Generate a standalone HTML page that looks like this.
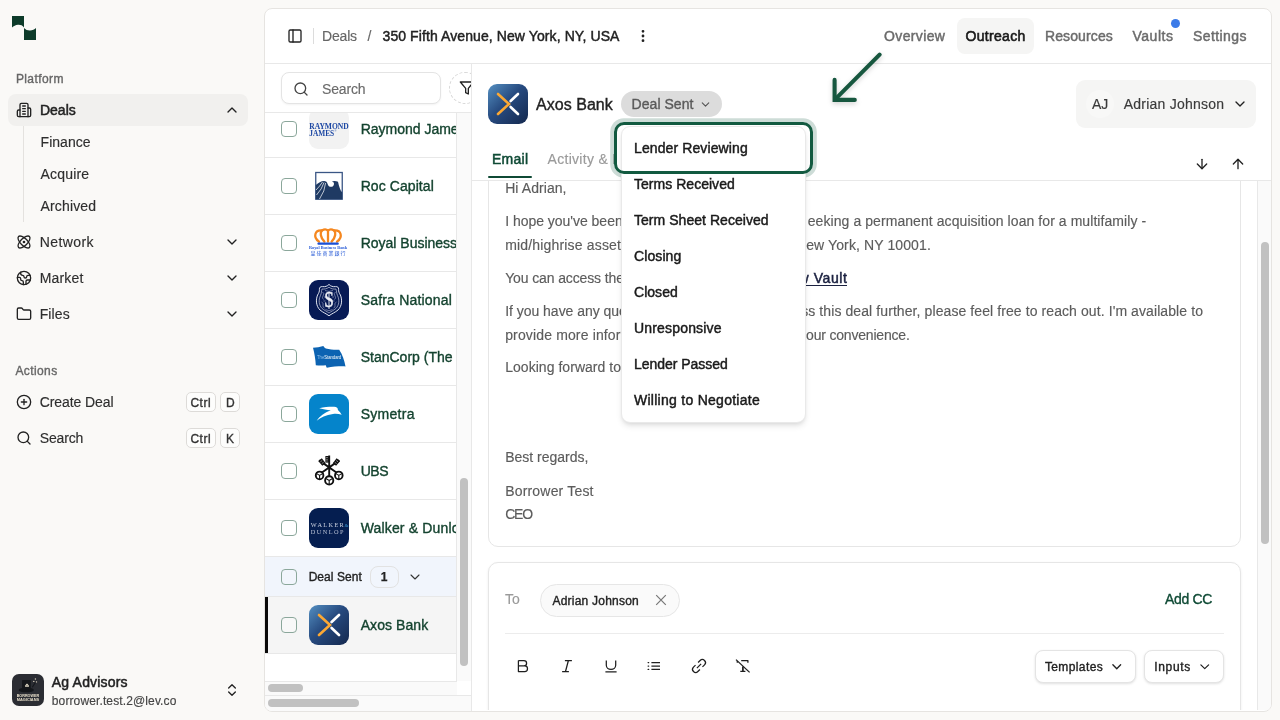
<!DOCTYPE html>
<html lang="en"><head><meta charset="utf-8"><title>Outreach - 350 Fifth Avenue</title>
<style>
*{box-sizing:border-box;margin:0;padding:0}
html,body{width:1280px;height:720px;overflow:hidden}
body{background:#faf9f7;font-family:"Liberation Sans",sans-serif;position:relative;color:#222}
#app{position:absolute;left:0;top:0;width:1280px;height:720px;will-change:transform}
.a,.t,.ic{position:absolute}
.t{white-space:pre;line-height:20px;display:block}
.ic{display:block;overflow:visible}
.cb{position:absolute;width:16px;height:16px;border:1px solid #8ba79b;border-radius:4px;background:#fff}
.kbd{position:absolute;height:20px;border:1px solid #dddbd8;border-radius:5px;background:#fdfdfc}
.row{position:absolute;left:0;width:192px;height:57px;border-bottom:1px solid #e8e8e8;background:#fff}
.logo{position:absolute;left:44px;width:40px;height:40px;border-radius:9px;overflow:hidden}
.btn{position:absolute;border:1px solid #e4e4e4;border-radius:8px;background:#fff;box-shadow:0 1px 3px rgba(0,0,0,.09),0 1px 2px rgba(0,0,0,.04)}
</style></head><body>
<div id="app">
<svg width="0" height="0" style="position:absolute"><defs><linearGradient id="axg" x1="0" y1="0" x2="1" y2="1"><stop offset="0" stop-color="#5590c2"/><stop offset=".45" stop-color="#274b80"/><stop offset="1" stop-color="#14284e"/></linearGradient></defs></svg>
<!-- sidebar -->
<svg class="ic" style="left:12px;top:16px" width="24" height="24" viewBox="0 0 24 24"><path fill="#0d3b2a" d="M0 0H12V11.4C10.5 9.2 8.2 8.6 6 8.8C3.6 9 1.6 10 0 11.6Z"/><path fill="#0d3b2a" d="M12 12C13.6 13.8 15.8 14.6 18 14.5C20.4 14.4 22.6 13.4 24 12V24H12Z"/></svg>
<div class="a" style="left:8px;top:94px;width:240px;height:32px;border-radius:8px;background:#f1f0ee"></div>
<div class="a" style="left:23px;top:126px;width:1px;height:96px;background:#e4e2df"></div>
<svg class="ic" style="left:16px;top:102px" width="16" height="16" viewBox="0 0 24 24" fill="none" stroke="#222" stroke-width="2" stroke-linecap="round" stroke-linejoin="round"><path d="M6 22V4a2 2 0 0 1 2-2h8a2 2 0 0 1 2 2v18Z"/><path d="M6 12H4a2 2 0 0 0-2 2v6a2 2 0 0 0 2 2h2"/><path d="M18 9h2a2 2 0 0 1 2 2v9a2 2 0 0 1-2 2h-2"/><path d="M10 6h4"/><path d="M10 10h4"/><path d="M10 14h4"/><path d="M10 18h4"/></svg>
<svg class="ic" style="left:224px;top:102px" width="16" height="16" viewBox="0 0 24 24" fill="none" stroke="#222" stroke-width="2" stroke-linecap="round" stroke-linejoin="round"><path d="m18 15-6-6-6 6"/></svg>
<svg class="ic" style="left:16px;top:234px" width="16" height="16" viewBox="0 0 24 24" fill="none" stroke="#222" stroke-width="2" stroke-linecap="round" stroke-linejoin="round"><circle cx="12" cy="12" r="1"/><path d="M20.2 20.2c2.04-2.03.02-7.36-4.5-11.9-4.54-4.52-9.87-6.54-11.9-4.5-2.04 2.03-.02 7.36 4.5 11.9 4.54 4.52 9.87 6.54 11.9 4.5Z"/><path d="M15.7 15.7c4.52-4.54 6.54-9.87 4.5-11.9-2.03-2.04-7.36-.02-11.9 4.5-4.52 4.54-6.54 9.87-4.5 11.9 2.03 2.04 7.36.02 11.9-4.5Z"/></svg>
<svg class="ic" style="left:224px;top:234px" width="16" height="16" viewBox="0 0 24 24" fill="none" stroke="#222" stroke-width="2" stroke-linecap="round" stroke-linejoin="round"><path d="m6 9 6 6 6-6"/></svg>
<svg class="ic" style="left:16px;top:270px" width="16" height="16" viewBox="0 0 24 24" fill="none" stroke="#222" stroke-width="2" stroke-linecap="round" stroke-linejoin="round"><path d="M21.54 15H17a2 2 0 0 0-2 2v4.54"/><path d="M7 3.34V5a3 3 0 0 0 3 3a2 2 0 0 1 2 2c0 1.1.9 2 2 2a2 2 0 0 0 2-2c0-1.1.9-2 2-2h3.17"/><path d="M11 21.95V18a2 2 0 0 0-2-2a2 2 0 0 1-2-2v-1a2 2 0 0 0-2-2H2.05"/><circle cx="12" cy="12" r="10"/></svg>
<svg class="ic" style="left:224px;top:270px" width="16" height="16" viewBox="0 0 24 24" fill="none" stroke="#222" stroke-width="2" stroke-linecap="round" stroke-linejoin="round"><path d="m6 9 6 6 6-6"/></svg>
<svg class="ic" style="left:16px;top:306px" width="16" height="16" viewBox="0 0 24 24" fill="none" stroke="#222" stroke-width="2" stroke-linecap="round" stroke-linejoin="round"><path d="M20 20a2 2 0 0 0 2-2V8a2 2 0 0 0-2-2h-7.9a2 2 0 0 1-1.69-.9L9.6 3.9A2 2 0 0 0 7.93 3H4a2 2 0 0 0-2 2v13a2 2 0 0 0 2 2Z"/></svg>
<svg class="ic" style="left:224px;top:306px" width="16" height="16" viewBox="0 0 24 24" fill="none" stroke="#222" stroke-width="2" stroke-linecap="round" stroke-linejoin="round"><path d="m6 9 6 6 6-6"/></svg>
<svg class="ic" style="left:16px;top:394px" width="16" height="16" viewBox="0 0 24 24" fill="none" stroke="#222" stroke-width="2" stroke-linecap="round" stroke-linejoin="round"><circle cx="12" cy="12" r="10"/><path d="M8 12h8"/><path d="M12 8v8"/></svg>
<svg class="ic" style="left:16px;top:430px" width="16" height="16" viewBox="0 0 24 24" fill="none" stroke="#222" stroke-width="2" stroke-linecap="round" stroke-linejoin="round"><circle cx="11" cy="11" r="8"/><path d="m21 21-4.3-4.3"/></svg>
<div class="kbd" style="left:186px;top:392px;width:30px"></div>
<div class="kbd" style="left:220px;top:392px;width:20px"></div>
<div class="kbd" style="left:186px;top:428px;width:30px"></div>
<div class="kbd" style="left:220px;top:428px;width:20px"></div>
<svg class="ic" style="left:12px;top:674px" width="32" height="32" viewBox="0 0 32 32"><rect width="32" height="32" rx="7" fill="#2b2d33"/><ellipse cx="14.3" cy="16" rx="7.6" ry="2.3" fill="#14161a"/><rect x="10" y="6" width="8.8" height="9.6" rx="0.6" fill="#15171b"/><path d="M13.3 11.2 L15 9.4 L16.7 11.2 V13 H13.3Z" fill="#e9e0cb"/><rect x="14.5" y="11.4" width="1" height="1.2" fill="#2b2d33"/><path d="M20.6 12.8 L23.2 8.8" stroke="#15171b" stroke-width="1.1" stroke-linecap="round"/><circle cx="23.4" cy="5" r="0.7" fill="#d9d0bb"/><circle cx="21.8" cy="7.4" r="0.7" fill="#d9d0bb"/><circle cx="24.5" cy="7.9" r="0.7" fill="#d9d0bb"/><text x="15.9" y="23.1" text-anchor="middle" font-family="Liberation Sans, sans-serif" font-weight="bold" font-size="3.3" fill="#e9e0cb" textLength="22.4" lengthAdjust="spacingAndGlyphs">BORROWER</text><text x="15.9" y="27.1" text-anchor="middle" font-family="Liberation Sans, sans-serif" font-weight="bold" font-size="3.9" fill="#e9e0cb" textLength="22.4" lengthAdjust="spacingAndGlyphs">MAGICIANS</text></svg>
<svg class="ic" style="left:224px;top:682px" width="16" height="16" viewBox="0 0 24 24" fill="none" stroke="#222" stroke-width="2" stroke-linecap="round" stroke-linejoin="round"><path d="m7 15 5 5 5-5"/><path d="m7 9 5-5 5 5"/></svg>
<span class="t" style="left:15.90px;top:69.00px;font-size:12px;color:#666;letter-spacing:0.402px;-webkit-text-stroke:0.36px #666;">Platform</span>
<span class="t" style="left:39.90px;top:100.00px;font-size:14px;color:#222;letter-spacing:0.021px;-webkit-text-stroke:0.5px #222;">Deals</span>
<span class="t" style="left:40.60px;top:132.00px;font-size:14px;color:#2e2e2e;letter-spacing:0.027px;-webkit-text-stroke:0.15px #2e2e2e;">Finance</span>
<span class="t" style="left:40.60px;top:164.00px;font-size:14px;color:#2e2e2e;letter-spacing:0.176px;-webkit-text-stroke:0.15px #2e2e2e;">Acquire</span>
<span class="t" style="left:40.60px;top:196.00px;font-size:14px;color:#2e2e2e;letter-spacing:0.129px;-webkit-text-stroke:0.15px #2e2e2e;">Archived</span>
<span class="t" style="left:39.70px;top:232.00px;font-size:14px;color:#2e2e2e;letter-spacing:0.406px;-webkit-text-stroke:0.15px #2e2e2e;">Network</span>
<span class="t" style="left:39.70px;top:268.00px;font-size:14px;color:#2e2e2e;letter-spacing:0.184px;-webkit-text-stroke:0.15px #2e2e2e;">Market</span>
<span class="t" style="left:39.70px;top:304.00px;font-size:14px;color:#2e2e2e;letter-spacing:0.127px;-webkit-text-stroke:0.15px #2e2e2e;">Files</span>
<span class="t" style="left:15.40px;top:361.00px;font-size:12px;color:#666;letter-spacing:0.406px;-webkit-text-stroke:0.36px #666;">Actions</span>
<span class="t" style="left:39.70px;top:392.00px;font-size:14px;color:#2e2e2e;letter-spacing:-0.073px;-webkit-text-stroke:0.15px #2e2e2e;">Create Deal</span>
<span class="t" style="left:39.70px;top:428.00px;font-size:14px;color:#2e2e2e;letter-spacing:-0.127px;-webkit-text-stroke:0.15px #2e2e2e;">Search</span>
<span class="t" style="left:190.40px;top:393.00px;font-size:12px;color:#333;letter-spacing:0.557px;-webkit-text-stroke:0.36px #333;">Ctrl</span>
<span class="t" style="left:226.10px;top:393.00px;font-size:12px;color:#333;letter-spacing:-0.472px;-webkit-text-stroke:0.36px #333;">D</span>
<span class="t" style="left:190.40px;top:429.00px;font-size:12px;color:#333;letter-spacing:0.557px;-webkit-text-stroke:0.36px #333;">Ctrl</span>
<span class="t" style="left:226.10px;top:429.00px;font-size:12px;color:#333;letter-spacing:0.184px;-webkit-text-stroke:0.36px #333;">K</span>
<span class="t" style="left:51.80px;top:672.00px;font-size:14px;color:#222;letter-spacing:0.188px;-webkit-text-stroke:0.5px #222;">Ag Advisors</span>
<span class="t" style="left:51.80px;top:691.00px;font-size:12px;color:#444;letter-spacing:0.122px;-webkit-text-stroke:0.15px #444;">borrower.test.2@lev.co</span>
<!-- main panel -->
<div class="a" style="left:264px;top:8px;width:1008px;height:704px;border:1px solid #e6e4e1;border-radius:8px;background:#fff;overflow:hidden"></div>
<div class="a" style="left:0;top:0;width:1280px;height:720px;clip-path:inset(9px 9px 9px 265px round 7px)">
<svg class="ic" style="left:287px;top:28px" width="16" height="16" viewBox="0 0 24 24" fill="none" stroke="#222" stroke-width="2" stroke-linecap="round" stroke-linejoin="round"><rect width="18" height="18" x="3" y="3" rx="2"/><path d="M9 3v18"/></svg>
<div class="a" style="left:313px;top:28px;width:1px;height:16px;background:#dcdcdc"></div>
<svg class="ic" style="left:635.3px;top:28px" width="16" height="16" viewBox="0 0 24 24" fill="none" stroke="#222" stroke-width="2.2" stroke-linecap="round" stroke-linejoin="round"><circle cx="12" cy="12" r="1"/><circle cx="12" cy="5" r="1"/><circle cx="12" cy="19" r="1"/></svg>
<div class="a" style="left:957px;top:18px;width:76.5px;height:35.5px;border-radius:8px;background:#f5f5f4"></div>
<div class="a" style="left:1170.8px;top:19px;width:9px;height:9px;border-radius:50%;background:#3b7be8"></div>
<div class="a" style="left:265px;top:63px;width:1006px;height:1px;background:#e8e8e8"></div>
<div class="a" style="left:281px;top:72px;width:160px;height:32px;border:1px solid #e4e4e4;border-radius:8px;background:#fff;box-shadow:0 1px 2px rgba(0,0,0,.05)"></div>
<svg class="ic" style="left:292.5px;top:80.5px" width="16" height="16" viewBox="0 0 24 24" fill="none" stroke="#444" stroke-width="2" stroke-linecap="round" stroke-linejoin="round"><circle cx="11" cy="11" r="8"/><path d="m21 21-4.3-4.3"/></svg>
<div class="a" style="left:449px;top:72px;width:22px;height:32px;overflow:hidden"><div class="a" style="left:0;top:0;width:32px;height:32px;border:1px dashed #d8d8d8;border-radius:50%"></div><svg class="ic" style="left:10.3px;top:8.3px" width="16" height="16" viewBox="0 0 24 24" fill="none" stroke="#222" stroke-width="2" stroke-linecap="round" stroke-linejoin="round"><polygon points="22 3 2 3 10 12.46 10 19 14 21 14 12.46 22 3"/></svg></div>
<div class="a" style="left:265px;top:112px;width:206px;height:1px;background:#e8e8e8"></div>
<div class="a" style="left:265px;top:113px;width:191.5px;height:567.5px;overflow:hidden;background:#fff">
<div class="row" style="top:-12.25px"></div>
<div class="cb" style="left:16px;top:8.25px"></div>
<div class="logo" style="top:-3.75px"><svg width="40" height="40" viewBox="0 0 40 40" style="display:block"><rect width="40" height="40" fill="#f2f2f2"/><text x="0.2" y="19.9" font-family="Liberation Serif, serif" font-weight="bold" font-size="8.6" fill="#1c47a3" textLength="39.6" lengthAdjust="spacingAndGlyphs">RAYMOND</text><text x="0.2" y="26.7" font-family="Liberation Serif, serif" font-weight="bold" font-size="8.2" fill="#1c47a3" textLength="25" lengthAdjust="spacingAndGlyphs">JAMES</text><text x="25.4" y="22.6" font-family="Liberation Sans, sans-serif" font-size="2.6" fill="#1c47a3">®</text></svg></div>
<div class="row" style="top:44.75px"></div>
<div class="cb" style="left:16px;top:65.25px"></div>
<div class="logo" style="top:53.25px"><svg width="40" height="40" viewBox="0 0 40 40" style="display:block"><rect width="40" height="40" fill="#fff"/><rect x="6.75" y="6.5" width="26.5" height="26.7" fill="#fff" stroke="#3a5685" stroke-width="1.3"/><path fill="#1f3a63" d="M6.8 19 C9.5 16.8 12 15 15 15 C17 15 18.2 16 18.6 18 C19.6 21.8 24.6 21.8 25 18 C25.2 16.6 24 15.6 22.7 15.6 C24 14.6 27 14.7 29 15.7 C30 20 31 24 33.2 26.5 V33.2 H6.8 Z"/><path d="M7 24 Q11 20 13.5 16 M7.5 29 Q13 23 15 16.5 M10.5 33 Q16 25 16.6 17" stroke="#fff" stroke-width=".7" fill="none"/></svg></div>
<div class="row" style="top:101.75px"></div>
<div class="cb" style="left:16px;top:122.25px"></div>
<div class="logo" style="top:110.25px"><svg width="40" height="40" viewBox="0 0 40 40" style="display:block"><rect width="40" height="40" fill="#fff"/><g fill="none" stroke="#f5871f" stroke-width="2.3" stroke-linecap="round"><path d="M10 18.6 C3.5 14 6 6.6 13 7.4 C15 6.2 17.5 6.2 19 7.6 C20.5 6.2 23 6.2 25 7.4 C32 6.6 34.5 14 28 18.6"/><path d="M15.4 18.6 C11 14 11 9.4 13 7.4 M19 7.6 V18.6 M22.6 18.6 C27 14 27 9.4 25 7.4"/></g><rect x="8.4" y="19.6" width="21.4" height="2.1" rx="1" fill="#1a50d8"/><text x="19" y="26.4" text-anchor="middle" font-family="Liberation Serif, serif" font-weight="bold" font-size="3.6" fill="#2458d6" textLength="38" lengthAdjust="spacingAndGlyphs">Royal Business Bank</text><text x="19" y="32.3" text-anchor="middle" font-family="Noto Sans CJK TC, Noto Sans CJK SC, sans-serif" font-size="5" fill="#2458d6" textLength="35" lengthAdjust="spacing">皇佳商業銀行</text></svg></div>
<div class="row" style="top:158.75px"></div>
<div class="cb" style="left:16px;top:179.25px"></div>
<div class="logo" style="top:167.25px"><svg width="40" height="40" viewBox="0 0 40 40" style="display:block"><rect width="40" height="40" fill="#071a55"/><g fill="none" stroke="#dfe3ee" stroke-linejoin="round"><path stroke-width="1" d="M20 4.400 C18.500 6.200 16 7 13.500 6.600 C11.500 6.400 10.200 7.400 10.400 9.400 C10.600 11.500 9.800 13 8.600 15 C6.600 20 7 26 11 30 C14 32.500 17.500 33.800 20 35.800 C22.500 33.800 26 32.500 29 30 C33 26 33.400 20 31.400 15 C30.200 13 29.400 11.500 29.600 9.400 C29.800 7.400 28.500 6.400 26.500 6.600 C24 7 21.500 6.200 20 4.400Z"/><path stroke-width=".6" d="M20 7.200 C18 8.800 15.500 9.300 13 9 C12.400 11 12.600 13.200 11.400 15.600 C9.400 20 9.800 25 13 28.400 C15.500 30.500 18 31.500 20 33 C22 31.500 24.500 30.500 27 28.400 C30.200 25 30.600 20 28.600 15.600 C27.400 13.200 27.600 11 27 9 C24.500 9.300 22 8.800 20 7.200Z"/><path stroke-width=".55" stroke="#b9c1d9" d="M13.500 12 q2.500 1.500 0.500 4 q-1.500 2 0.500 3.500 M26.500 12 q-2.500 1.500 -0.500 4 q1.500 2 -0.500 3.500 M12.500 22 q2.500 1 1.500 3.500 q-0.500 2 1.500 2.500 M27.500 22 q-2.500 1 -1.500 3.500 q0.500 2 -1.500 2.500 M16.500 29.500 q3.500 2.500 7 0 M16 10.500 q4 1.800 8 0 M15 17 h2 M23 17 h2 M14.500 21 h2 M23.500 21 h2"/></g><g transform="translate(20 27) scale(.72 1)"><text x="0" y="0" text-anchor="middle" font-family="Liberation Serif, serif" font-size="24" fill="#eef0f6" stroke="#eef0f6" stroke-width=".5">S</text></g><path d="M20 12 V29" stroke="#eef0f6" stroke-width=".9"/></svg></div>
<div class="row" style="top:215.75px"></div>
<div class="cb" style="left:16px;top:236.25px"></div>
<div class="logo" style="top:224.25px"><svg width="40" height="40" viewBox="0 0 40 40" style="display:block"><rect width="40" height="40" fill="#fff"/><path fill="#0c63b2" d="M4 10.800 C7.500 10.600 11 10 14.300 9 C15 10 15.800 10.900 16.800 11.500 C21 12.600 26 12.900 30.200 12.700 C33.500 17.500 35.400 23.500 36.500 29.400 C30 29.200 24 29.700 17.800 30.800 C17.300 30 17 29.100 16.800 28.200 C13.500 28.500 10 28.500 6.800 28.200 C6.500 22.300 5.500 16.500 4 10.800Z"/><text x="8" y="21.800" font-family="Liberation Sans, sans-serif" font-size="4.6" fill="#fff" textLength="24.200" lengthAdjust="spacingAndGlyphs"><tspan fill="#8fc0ea">The</tspan>Standard</text></svg></div>
<div class="row" style="top:272.75px"></div>
<div class="cb" style="left:16px;top:293.25px"></div>
<div class="logo" style="top:281.25px"><svg width="40" height="40" viewBox="0 0 40 40" style="display:block"><rect width="40" height="40" fill="#0584cb"/><path fill="#fff" d="M10.200 14.200 C16 13.200 22 12.600 26.800 13 C28.200 13.300 29 14.600 28.900 16.100 C30.500 17.500 31.800 19 32.700 20.700 C30 19.800 27 19.600 24 19.900 C17 20.800 11.500 23.500 7.700 26.700 C10.500 22.500 15.500 18.500 21.800 16.500 C18 15.800 14 15 10.200 14.200Z"/></svg></div>
<div class="row" style="top:329.75px"></div>
<div class="cb" style="left:16px;top:350.25px"></div>
<div class="logo" style="top:338.25px"><svg width="40" height="40" viewBox="0 0 40 40" style="display:block"><rect width="40" height="40" fill="#fff"/><g stroke="#111" fill="none" stroke-linecap="butt"><path stroke-width="1.900" d="M20.200 4.500 V25 M12.600 21.800 L30.200 9.400 M27.800 21.800 L10.200 9.400"/><circle cx="10.600" cy="24.400" r="3.800" stroke-width="1.900"/><circle cx="29.800" cy="24.400" r="3.800" stroke-width="1.900"/><circle cx="20.200" cy="29.400" r="4.100" stroke-width="1.900"/><path stroke-width="1.100" d="M10.600 24.400 l0 3.500 M10.600 24.400 l-3 -1.800 M10.600 24.400 l3 -1.800 M29.800 24.400 l0 3.500 M29.800 24.400 l-3 -1.800 M29.800 24.400 l3 -1.800 M20.200 29.400 l0 3.800 M20.200 29.400 l-3.300 -1.900 M20.200 29.400 l3.300 -1.900"/></g><g fill="#111"><rect x="16.400" y="5" width="3.500" height="6.600"/><path d="M9.200 10 l3.600 -2.700 l3.900 5 l-3.400 2.500Z M31.200 10 l-3.600 -2.700 l-3.900 5 l3.400 2.500Z"/></g><g stroke="#fff" stroke-width=".5"><path d="M17.200 6.500 h1.600 M17.200 8.300 h1.600 M17.200 10 h1.600 M11.400 10.800 l1.800 -1.300 M12.800 12.600 l1.800 -1.300 M29 10.800 l-1.800 -1.300 M27.600 12.600 l-1.800 -1.300"/></g></svg></div>
<div class="row" style="top:386.75px"></div>
<div class="cb" style="left:16px;top:407.25px"></div>
<div class="logo" style="top:395.25px"><svg width="40" height="40" viewBox="0 0 40 40" style="display:block"><rect width="40" height="40" fill="#051e50"/><text x="1.800" y="18.700" font-family="Liberation Serif, serif" font-size="6.300" fill="#cfd5e3" textLength="33" lengthAdjust="spacing">WALKER</text><text x="35.600" y="18.700" font-family="Liberation Serif, serif" font-size="5" fill="#3a9bd9">&amp;</text><text x="1.800" y="25.800" font-family="Liberation Serif, serif" font-size="6.300" fill="#b9c1d4" textLength="32.600" lengthAdjust="spacing">DUNLOP</text></svg></div>
<div class="a" style="left:0;top:443.5px;width:192px;height:40px;background:#f1f5fc;border-bottom:1px solid #e8e8e8"></div>
<div class="cb" style="left:16px;top:455.5px;background:transparent"></div>
<div class="a" style="left:105.19999999999999px;top:452.5px;width:28.5px;height:22px;border:1px solid #e2e2e2;border-radius:8px"></div>
<svg class="ic" style="left:141.8px;top:455.8px" width="16" height="16" viewBox="0 0 24 24" fill="none" stroke="#333" stroke-width="1.6" stroke-linecap="round" stroke-linejoin="round"><path d="m6 9 6 6 6-6"/></svg>
<div class="a" style="left:0;top:483.5px;width:192px;height:57px;background:#f5f5f5;border-bottom:1px solid #e8e8e8"></div>
<div class="a" style="left:0;top:483.5px;width:3px;height:56.5px;background:#0a0a0a"></div>
<div class="cb" style="left:16px;top:504px;background:#f8f8f8"></div>
<div class="logo" style="top:492px"><svg width="40" height="40" viewBox="0 0 40 40" style="display:block"><rect width="40" height="40" fill="url(#axg)"/><path d="M10 10 L21 20 L10 30" fill="none" stroke="#fba834" stroke-width="2.600" stroke-linecap="round" stroke-linejoin="miter"/><path d="M30 10 L22.600 17 M22.600 23 L30 30" fill="none" stroke="#fff" stroke-width="2.600" stroke-linecap="round"/></svg></div>
<span class="t" style="left:95.65px;top:6.00px;font-size:14px;color:#14432f;letter-spacing:-0.007px;-webkit-text-stroke:0.36px #14432f;">Raymond James</span>
<span class="t" style="left:95.65px;top:63.00px;font-size:14px;color:#14432f;letter-spacing:0.075px;-webkit-text-stroke:0.36px #14432f;">Roc Capital</span>
<span class="t" style="left:95.65px;top:120.00px;font-size:14px;color:#14432f;letter-spacing:-0.004px;-webkit-text-stroke:0.36px #14432f;">Royal Business Bank</span>
<span class="t" style="left:95.65px;top:177.00px;font-size:14px;color:#14432f;letter-spacing:0.195px;-webkit-text-stroke:0.36px #14432f;">Safra National Bank</span>
<span class="t" style="left:95.65px;top:234.00px;font-size:14px;color:#14432f;letter-spacing:0.009px;-webkit-text-stroke:0.36px #14432f;">StanCorp (The Standard)</span>
<span class="t" style="left:95.65px;top:291.00px;font-size:14px;color:#14432f;letter-spacing:0.296px;-webkit-text-stroke:0.36px #14432f;">Symetra</span>
<span class="t" style="left:95.65px;top:348.00px;font-size:14px;color:#14432f;letter-spacing:-0.449px;-webkit-text-stroke:0.36px #14432f;">UBS</span>
<span class="t" style="left:95.65px;top:405.00px;font-size:14px;color:#14432f;letter-spacing:0.161px;-webkit-text-stroke:0.36px #14432f;">Walker &amp; Dunlop</span>
<span class="t" style="left:43.65px;top:454.00px;font-size:12px;color:#222;letter-spacing:0.055px;-webkit-text-stroke:0.36px #222;">Deal Sent</span>
<span class="t" style="left:115.70px;top:454.00px;font-size:12px;color:#222;letter-spacing:0.513px;-webkit-text-stroke:0.25px #222;font-weight:bold;">1</span>
<span class="t" style="left:95.65px;top:502.00px;font-size:14px;color:#14432f;letter-spacing:0.085px;-webkit-text-stroke:0.36px #14432f;">Axos Bank</span>
</div>
<div class="a" style="left:456px;top:113px;width:15px;height:567.5px;background:#fafafa;border-left:1px solid #e8e8e8"></div>
<div class="a" style="left:460.25px;top:477.5px;width:7.5px;height:188px;border-radius:4px;background:#c1c1c1"></div>
<div class="a" style="left:265px;top:680.5px;width:191.5px;height:15px;background:#fafafa;border-top:1px solid #e8e8e8"></div><div class="a" style="left:265px;top:694.5px;width:206px;height:1px;background:#e8e8e8"></div>
<div class="a" style="left:268.25px;top:684.25px;width:34.75px;height:7.5px;border-radius:4px;background:#c1c1c1"></div>
<div class="a" style="left:265px;top:695.5px;width:206px;height:16px;background:#fafafa"></div>
<div class="a" style="left:268.25px;top:699.25px;width:90.75px;height:7.5px;border-radius:4px;background:#c1c1c1"></div>
<div class="a" style="left:471px;top:64px;width:1px;height:647px;background:#e8e8e8"></div>
<div class="a" style="left:488px;top:84px;width:40px;height:40px;border-radius:9px;overflow:hidden"><svg width="40" height="40" viewBox="0 0 40 40" style="display:block"><rect width="40" height="40" fill="url(#axg)"/><path d="M10 10 L21 20 L10 30" fill="none" stroke="#fba834" stroke-width="2.600" stroke-linecap="round" stroke-linejoin="miter"/><path d="M30 10 L22.600 17 M22.600 23 L30 30" fill="none" stroke="#fff" stroke-width="2.600" stroke-linecap="round"/></svg></div>
<div class="a" style="left:621px;top:91px;width:101px;height:26px;border-radius:13px;background:#dcdcdc"></div>
<svg class="ic" style="left:698.5px;top:98px" width="13" height="13" viewBox="0 0 24 24" fill="none" stroke="#555" stroke-width="2" stroke-linecap="round" stroke-linejoin="round"><path d="m6 9 6 6 6-6"/></svg>
<div class="a" style="left:1076px;top:80px;width:180px;height:48px;border-radius:9px;background:#f5f5f4"></div>
<div class="a" style="left:1086px;top:90px;width:28px;height:28px;border-radius:50%;background:#f8f8f7"></div>
<svg class="ic" style="left:1232px;top:96px" width="16" height="16" viewBox="0 0 24 24" fill="none" stroke="#222" stroke-width="2" stroke-linecap="round" stroke-linejoin="round"><path d="m6 9 6 6 6-6"/></svg>
<div class="a" style="left:472px;top:180px;width:799px;height:1px;background:#e8e8e8"></div>
<div class="a" style="left:488px;top:176px;width:43.5px;height:2px;background:#0f4a35;border-radius:1px"></div>
<svg class="ic" style="left:1193.8px;top:156px" width="16" height="16" viewBox="0 0 24 24" fill="none" stroke="#222" stroke-width="2" stroke-linecap="round" stroke-linejoin="round"><path d="M12 5v14"/><path d="m19 12-7 7-7-7"/></svg>
<svg class="ic" style="left:1229.8px;top:156px" width="16" height="16" viewBox="0 0 24 24" fill="none" stroke="#222" stroke-width="2" stroke-linecap="round" stroke-linejoin="round"><path d="m5 12 7-7 7 7"/><path d="M12 19V5"/></svg>
<div class="a" style="left:472px;top:181px;width:786px;height:529px;overflow:hidden;background:#fff">
<div class="a" style="left:16px;top:-20px;width:753px;height:385.5px;border:1px solid #e6e6e6;border-radius:10px;background:#fff"></div>
<span class="t" style="left:33.20px;top:-3.00px;font-size:14px;color:#5c5c5c;letter-spacing:0.070px;-webkit-text-stroke:0.15px #5c5c5c;">Hi Adrian,</span>
<span class="t" style="left:33.20px;top:30.00px;font-size:14px;color:#5c5c5c;letter-spacing:-0.023px;-webkit-text-stroke:0.15px #5c5c5c;max-width:292.2px;overflow:hidden;">I hope you've been well. We are currently s</span>
<span class="t" style="left:335.78px;top:30.00px;font-size:14px;color:#5c5c5c;letter-spacing:0.069px;-webkit-text-stroke:0.15px #5c5c5c;">ee</span>
<span class="t" style="left:351.50px;top:30.00px;font-size:14px;color:#5c5c5c;letter-spacing:0.069px;-webkit-text-stroke:0.15px #5c5c5c;">king a permanent acquisition loan for a multifamily -</span>
<span class="t" style="left:33.20px;top:54.00px;font-size:14px;color:#5c5c5c;letter-spacing:0.171px;-webkit-text-stroke:0.15px #5c5c5c;max-width:292.2px;overflow:hidden;">mid/highrise asset located at 350 Fifth Avenue, </span>
<span class="t" style="left:323.96px;top:54.00px;font-size:14px;color:#5c5c5c;letter-spacing:0.110px;-webkit-text-stroke:0.15px #5c5c5c;">N</span>
<span class="t" style="left:334.20px;top:54.00px;font-size:14px;color:#5c5c5c;letter-spacing:0.110px;-webkit-text-stroke:0.15px #5c5c5c;">ew York, NY 10001.</span>
<span class="t" style="left:33.20px;top:87.00px;font-size:14px;color:#5c5c5c;letter-spacing:-0.125px;-webkit-text-stroke:0.15px #5c5c5c;max-width:292.2px;overflow:hidden;">You can access the deal materials here:</span>
<span class="t" style="left:304.89px;top:87.00px;font-size:14px;color:#1b2140;letter-spacing:0.565px;-webkit-text-stroke:0.5px #1b2140;">View </span>
<span class="t" style="left:341.70px;top:87.00px;font-size:14px;color:#1b2140;letter-spacing:0.565px;-webkit-text-stroke:0.5px #1b2140;">Vault</span>
<span class="t" style="left:33.20px;top:120.00px;font-size:14px;color:#5c5c5c;letter-spacing:-0.029px;-webkit-text-stroke:0.15px #5c5c5c;max-width:292.2px;overflow:hidden;">If you have any questions or would like to discu</span>
<span class="t" style="left:329.21px;top:120.00px;font-size:14px;color:#5c5c5c;letter-spacing:0.089px;-webkit-text-stroke:0.15px #5c5c5c;">s</span>
<span class="t" style="left:336.30px;top:120.00px;font-size:14px;color:#5c5c5c;letter-spacing:0.089px;-webkit-text-stroke:0.15px #5c5c5c;">s this deal further, please feel free to reach out. I'm available to</span>
<span class="t" style="left:33.20px;top:144.00px;font-size:14px;color:#5c5c5c;letter-spacing:0.143px;-webkit-text-stroke:0.15px #5c5c5c;max-width:292.2px;overflow:hidden;">provide more information or schedule a call at y</span>
<span class="t" style="left:334.10px;top:144.00px;font-size:14px;color:#5c5c5c;letter-spacing:-0.196px;-webkit-text-stroke:0.15px #5c5c5c;">o</span>
<span class="t" style="left:341.70px;top:144.00px;font-size:14px;color:#5c5c5c;letter-spacing:-0.196px;-webkit-text-stroke:0.15px #5c5c5c;">ur convenience.</span>
<span class="t" style="left:33.20px;top:176.00px;font-size:14px;color:#5c5c5c;letter-spacing:0.040px;-webkit-text-stroke:0.15px #5c5c5c;max-width:292.2px;overflow:hidden;">Looking forward to hearing from you.</span>
<span class="t" style="left:33.20px;top:266.00px;font-size:14px;color:#5c5c5c;letter-spacing:-0.005px;-webkit-text-stroke:0.15px #5c5c5c;">Best regards,</span>
<span class="t" style="left:33.20px;top:300.00px;font-size:14px;color:#5c5c5c;letter-spacing:0.184px;-webkit-text-stroke:0.15px #5c5c5c;">Borrower Test</span>
<span class="t" style="left:33.20px;top:323.00px;font-size:14px;color:#5c5c5c;letter-spacing:-1.215px;-webkit-text-stroke:0.15px #5c5c5c;">CEO</span>
<div class="a" style="left:305px;top:103.60000000000002px;width:70px;height:1px;background:#1b2140"></div>
<div class="a" style="left:16px;top:381px;width:753px;height:200px;border:1px solid #e6e6e6;border-radius:10px;background:#fff;box-shadow:0 1px 3px rgba(0,0,0,.07)"></div>
</div>
<div class="a" style="left:540px;top:583.5px;width:139.5px;height:33.5px;border-radius:17px;border:1px solid #e6e6e6;background:#fafafa"></div>
<svg class="ic" style="left:652.7px;top:592.4px" width="16" height="16" viewBox="0 0 16 16" fill="none" stroke="#777" stroke-width="1.2" stroke-linecap="butt" stroke-linejoin="round"><path d="M3.200 3.200 L12.800 12.800 M12.800 3.200 L3.200 12.800"/></svg>
<div class="a" style="left:505px;top:633px;width:719px;height:1px;background:#ececec"></div>
<svg class="ic" style="left:515px;top:658.3px" width="16" height="16" viewBox="0 0 16 16" fill="none" stroke="#1f1f1f" stroke-width="1.25" stroke-linecap="butt" stroke-linejoin="round"><path d="M3.4 2.5 H8.9 A2.7 2.7 0 0 1 8.9 7.9 H3.4 M8.9 7.9 H9.7 A2.8 2.8 0 0 1 9.7 13.5 H3.4 V2.5"/></svg>
<svg class="ic" style="left:559.1px;top:658.3px" width="16" height="16" viewBox="0 0 16 16" fill="none" stroke="#1f1f1f" stroke-width="1.25" stroke-linecap="butt" stroke-linejoin="round"><path d="M5.9 2.5 H12.9 M3.1 13.5 H9.9 M9.4 2.5 L6.5 13.5"/></svg>
<svg class="ic" style="left:602.85px;top:658.3px" width="16" height="16" viewBox="0 0 16 16" fill="none" stroke="#1f1f1f" stroke-width="1.25" stroke-linecap="butt" stroke-linejoin="round"><path d="M3.3 2.4 V7.2 A4.7 4.2 0 0 0 12.7 7.2 V2.4 M2.4 13.8 H13.6"/></svg>
<svg class="ic" style="left:647px;top:658.3px" width="16" height="16" viewBox="0 0 16 16" fill="none" stroke="#1f1f1f" stroke-width="1.25" stroke-linecap="butt" stroke-linejoin="round"><path d="M4.4 4.5 H13 M4.4 8 H13 M4.4 11.400 H13"/><path d="M1.100 4.500 h.6 M1.100 8 h.6 M1.100 11.400 h.6" stroke-linecap="round"/></svg>
<svg class="ic" style="left:691px;top:658.3px" width="16" height="16" viewBox="0 0 16 16" fill="none" stroke="#1f1f1f" stroke-width="1.25" stroke-linecap="butt" stroke-linejoin="round"><g transform="rotate(-45 8 8)"><path d="M6.200 4.900 H3.300 A3.100 3.100 0 0 0 3.300 11.100 H6.200 M9.800 4.900 H12.700 A3.100 3.100 0 0 1 12.700 11.100 H9.800 M5 8 H11"/></g></svg>
<svg class="ic" style="left:734.9px;top:658.3px" width="16" height="16" viewBox="0 0 16 16" fill="none" stroke="#1f1f1f" stroke-width="1.25" stroke-linecap="butt" stroke-linejoin="round"><path d="M1 1.600 L14.600 14.400" stroke-width="1.300"/><path d="M6.200 2.600 H12.900 V4.800 M2.300 3 V4.800 M5.300 13.400 H10.400" stroke-width="1.300"/><path d="M7.900 8.600 V13.200" stroke-width="1.700"/></svg>
<div class="btn" style="left:1035px;top:650px;width:100.5px;height:32.5px"></div>
<div class="btn" style="left:1143.5px;top:650px;width:80px;height:32.5px"></div>
<svg class="ic" style="left:1108.95px;top:658.85px" width="15.5" height="15.5" viewBox="0 0 24 24" fill="none" stroke="#222" stroke-width="2.1" stroke-linecap="round" stroke-linejoin="round"><path d="m6 9 6 6 6-6"/></svg>
<svg class="ic" style="left:1197.25px;top:658.85px" width="15.5" height="15.5" viewBox="0 0 24 24" fill="none" stroke="#222" stroke-width="1.9" stroke-linecap="round" stroke-linejoin="round"><path d="m6 9 6 6 6-6"/></svg>
<div class="a" style="left:1257px;top:181px;width:14.5px;height:529px;background:#fafafa;border-left:1px solid #e8e8e8"></div>
<div class="a" style="left:1261.2px;top:242px;width:7.6px;height:301.800px;border-radius:4px;background:#c1c1c1"></div>
<span class="t" style="left:322.00px;top:26.00px;font-size:14px;color:#666;letter-spacing:-0.179px;-webkit-text-stroke:0.15px #666;">Deals</span>
<span class="t" style="left:367.60px;top:26.00px;font-size:14px;color:#666;-webkit-text-stroke:0.15px #666;">/</span>
<span class="t" style="left:382.50px;top:26.00px;font-size:14px;color:#222;letter-spacing:0.093px;-webkit-text-stroke:0.45px #222;">350 Fifth Avenue, New York, NY, USA</span>
<span class="t" style="left:884.10px;top:26.00px;font-size:14px;color:#6b6b6b;letter-spacing:0.355px;-webkit-text-stroke:0.45px #6b6b6b;">Overview</span>
<span class="t" style="left:965.50px;top:26.00px;font-size:14px;color:#1a1a1a;letter-spacing:0.313px;-webkit-text-stroke:0.6px #1a1a1a;">Outreach</span>
<span class="t" style="left:1045.00px;top:26.00px;font-size:14px;color:#6b6b6b;letter-spacing:0.109px;-webkit-text-stroke:0.45px #6b6b6b;">Resources</span>
<span class="t" style="left:1132.40px;top:26.00px;font-size:14px;color:#6b6b6b;letter-spacing:0.554px;-webkit-text-stroke:0.45px #6b6b6b;">Vaults</span>
<span class="t" style="left:1193.10px;top:26.00px;font-size:14px;color:#6b6b6b;letter-spacing:0.388px;-webkit-text-stroke:0.45px #6b6b6b;">Settings</span>
<span class="t" style="left:322.00px;top:79.00px;font-size:14px;color:#6b6b6b;letter-spacing:-0.168px;-webkit-text-stroke:0.15px #6b6b6b;">Search</span>
<span class="t" style="left:536.00px;top:95.00px;font-size:16px;color:#222;letter-spacing:0.035px;-webkit-text-stroke:0.36px #222;">Axos Bank</span>
<span class="t" style="left:631.60px;top:94.00px;font-size:14px;color:#5a5a5a;letter-spacing:0.035px;-webkit-text-stroke:0.36px #5a5a5a;">Deal Sent</span>
<span class="t" style="left:491.90px;top:149.00px;font-size:14px;color:#0f4a35;letter-spacing:0.297px;-webkit-text-stroke:0.5px #0f4a35;">Email</span>
<span class="t" style="left:547.50px;top:149.00px;font-size:14px;color:#9a9a9a;letter-spacing:0.302px;-webkit-text-stroke:0.15px #9a9a9a;">Activity &amp; Notes</span>
<span class="t" style="left:1091.90px;top:94.00px;font-size:14px;color:#3a3a3a;letter-spacing:-0.072px;-webkit-text-stroke:0.15px #3a3a3a;">AJ</span>
<span class="t" style="left:1123.70px;top:94.00px;font-size:14px;color:#3a3a3a;letter-spacing:0.236px;-webkit-text-stroke:0.15px #3a3a3a;">Adrian Johnson</span>
<span class="t" style="left:504.90px;top:589.00px;font-size:14px;color:#9a9a9a;letter-spacing:0.102px;-webkit-text-stroke:0.15px #9a9a9a;">To</span>
<span class="t" style="left:552.50px;top:591.00px;font-size:12px;color:#222;letter-spacing:0.222px;-webkit-text-stroke:0.36px #222;">Adrian Johnson</span>
<span class="t" style="left:1165.10px;top:589.00px;font-size:14px;color:#0f4a35;letter-spacing:-0.339px;-webkit-text-stroke:0.36px #0f4a35;">Add CC</span>
<span class="t" style="left:1044.90px;top:657.00px;font-size:12px;color:#222;letter-spacing:0.389px;-webkit-text-stroke:0.36px #222;">Templates</span>
<span class="t" style="left:1154.20px;top:657.00px;font-size:12px;color:#222;letter-spacing:0.683px;-webkit-text-stroke:0.36px #222;">Inputs</span>
<svg class="ic" style="left:820px;top:44px;filter:drop-shadow(0 2px 2.5px rgba(0,0,0,.18))" width="80" height="70" viewBox="820 44 80 70" fill="none" stroke="#17573f" stroke-width="4.1" stroke-linecap="round" stroke-linejoin="miter"><path d="M879.6 54.6 L835.6 98.9"/><path d="M834.6 79.900 V99.900 H854.800"/></svg>
<div class="a" style="left:614px;top:122px;width:199px;height:52px;border-radius:10px;background:#fff;box-shadow:0 0 0 3.8px rgba(21,90,64,.21)"></div>
<div class="a" style="left:621px;top:125.5px;width:184.5px;height:297px;border-radius:9px;background:#fff;border:1px solid #e9e9e9;box-shadow:0 4px 6px -1px rgba(0,0,0,.1),0 2px 4px -2px rgba(0,0,0,.1)"></div>
<span class="t" style="left:634.00px;top:138.00px;font-size:14px;color:#1a1a1a;letter-spacing:0.108px;-webkit-text-stroke:0.45px #1a1a1a;">Lender Reviewing</span>
<span class="t" style="left:634.00px;top:174.00px;font-size:14px;color:#1a1a1a;letter-spacing:0.030px;-webkit-text-stroke:0.45px #1a1a1a;">Terms Received</span>
<span class="t" style="left:634.00px;top:210.00px;font-size:14px;color:#1a1a1a;letter-spacing:0.040px;-webkit-text-stroke:0.45px #1a1a1a;">Term Sheet Received</span>
<span class="t" style="left:634.00px;top:246.00px;font-size:14px;color:#1a1a1a;letter-spacing:0.100px;-webkit-text-stroke:0.45px #1a1a1a;">Closing</span>
<span class="t" style="left:634.00px;top:282.00px;font-size:14px;color:#1a1a1a;letter-spacing:0.034px;-webkit-text-stroke:0.45px #1a1a1a;">Closed</span>
<span class="t" style="left:634.00px;top:318.00px;font-size:14px;color:#1a1a1a;letter-spacing:0.174px;-webkit-text-stroke:0.45px #1a1a1a;">Unresponsive</span>
<span class="t" style="left:634.00px;top:354.00px;font-size:14px;color:#1a1a1a;letter-spacing:-0.030px;-webkit-text-stroke:0.45px #1a1a1a;">Lender Passed</span>
<span class="t" style="left:634.00px;top:390.00px;font-size:14px;color:#1a1a1a;letter-spacing:0.269px;-webkit-text-stroke:0.45px #1a1a1a;">Willing to Negotiate</span>
<div class="a" style="left:614px;top:122px;width:199px;height:52px;border-radius:10px;border:3px solid #125a40"></div>
</div>
</div>
</body></html>
